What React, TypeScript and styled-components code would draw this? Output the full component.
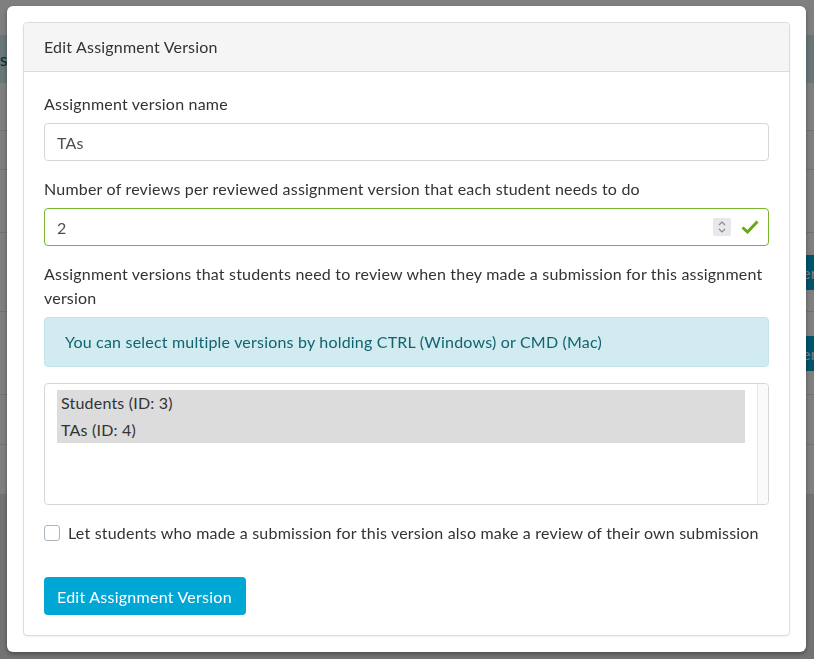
import React from "react";
import styled, { createGlobalStyle } from "styled-components";

const GlobalStyle = createGlobalStyle`
  html, body { margin: 0; padding: 0; }
  body {
    font-family: Lato, "Open Sans", "Noto Sans", sans-serif;
    font-size: 16px;
    letter-spacing: 0.2px;
    color: #333;
    background: #e6e6e6;
    overflow: hidden;
  }
  * { box-sizing: border-box; }
`;

/* ---------- underlying page (dimmed by the backdrop) ---------- */
const Page = styled.div`
  height: 659px;
  display: flex;
  flex-direction: column;
  background: #e6e6e6;
`;
const PageTop = styled.div`
  height: 35px;
  background: #fff;
`;
const InfoBand = styled.div`
  height: 48px;
  background: #d1ecf1;
  color: #0c5460;
  display: flex;
  align-items: center;
  padding-left: 0;
  font-size: 17px;
`;
const PageRow = styled.div<{ $h: number }>`
  height: ${(p) => p.$h}px;
  background: #fff;
  border-bottom: 1px solid #dee2e6;
  display: flex;
  justify-content: flex-end;
  align-items: center;
`;
const PageButton = styled.div`
  width: 60px;
  height: 35px;
  margin-right: -44px;
  background: #00a7d5;
  color: #fff;
  border-radius: 4px;
  display: flex;
  align-items: center;
  padding-left: 4px;
  font-size: 16px;
`;

/* ---------- modal ---------- */
const Backdrop = styled.div`
  position: fixed;
  inset: 0;
  background: rgba(0, 0, 0, 0.5);
  padding: 6px 8px 7px 7px;
  display: flex;
  align-items: flex-start;
`;
const Modal = styled.div`
  width: 799px;
  height: 646px;
  background: #fff;
  border-radius: 6px;
  box-shadow: 0 2px 4px rgba(0, 0, 0, 0.35);
  padding: 16px;
`;
const Card = styled.div`
  border: 1px solid #dcdcdc;
  border-radius: 4px;
  box-shadow: 0 1px 2px rgba(0, 0, 0, 0.06);
  overflow: hidden;
`;
const CardHeader = styled.div`
  height: 49px;
  background: #f5f5f5;
  border-bottom: 1px solid #dcdcdc;
  padding: 0 20px;
  display: flex;
  align-items: center;
  line-height: 24px;
`;
const CardBody = styled.div`
  padding: 20px 20px 20px;
  display: flex;
  flex-direction: column;
`;
const Group = styled.div`
  margin-bottom: 16px;
  display: flex;
  flex-direction: column;
`;
const Label = styled.label`
  display: block;
  line-height: 24px;
  margin-bottom: 7px;
  color: #333;
`;
const InputWrap = styled.div`
  position: relative;
`;
const TextInput = styled.input<{ $valid?: boolean }>`
  width: 100%;
  height: 38px;
  border: 1px solid ${(p) => (p.$valid ? "#7ab52c" : "#d4d7da")};
  border-radius: 4px;
  padding: 0 12px;
  font: inherit;
  letter-spacing: inherit;
  color: #4a4f55;
  background: #fff;
  outline: none;
`;
const Adornments = styled.div`
  position: absolute;
  right: 10px;
  top: 0;
  bottom: 0;
  display: flex;
  align-items: center;
  gap: 10px;
  pointer-events: none;
`;
const Spinner = styled.div`
  width: 18px;
  height: 18px;
  background: #e8e8ec;
  border-radius: 2px;
  display: flex;
  align-items: center;
  justify-content: center;
`;
const Alert = styled.div`
  background: #d2ebf0;
  border: 1px solid #c3e4ea;
  border-radius: 4px;
  color: #10646f;
  padding: 12px 20px;
  line-height: 24px;
  margin-bottom: 16px;
`;
const SelectBox = styled.div`
  height: 122px;
  border: 1px solid #d4d7da;
  border-radius: 4px;
  display: flex;
  margin-bottom: 16px;
  overflow: hidden;
`;
const OptionList = styled.div`
  flex: 1;
  padding: 6px 12px;
`;
const Option = styled.div<{ $selected?: boolean }>`
  height: 26.5px;
  line-height: 26px;
  padding-left: 4px;
  background: ${(p) => (p.$selected ? "#dcdcdc" : "transparent")};
  color: #333;
`;
const ScrollTrack = styled.div`
  width: 11px;
  background: #fafafa;
  border-left: 1px solid #e6e6e6;
`;
const CheckRow = styled.label`
  display: flex;
  align-items: center;
  gap: 8px;
  line-height: 24px;
  margin-bottom: 32px;
  white-space: nowrap;
`;
const CheckBox = styled.span`
  width: 16px;
  height: 16px;
  border: 1px solid #adb5bd;
  border-radius: 3px;
  background: #fff;
  flex-shrink: 0;
`;
const Button = styled.button`
  align-self: flex-start;
  height: 38px;
  padding: 0 14px 0 13px;
  border: none;
  border-radius: 4px;
  background: #00a7d5;
  color: #fff;
  font: inherit;
  letter-spacing: 0.25px;
  cursor: pointer;
`;

export default function App() {
  return (
    <>
      <GlobalStyle />
      <Page>
        <PageTop />
        <InfoBand>si</InfoBand>
        <PageRow $h={48} />
        <PageRow $h={39} />
        <PageRow $h={63} />
        <PageRow $h={79}>
          <PageButton>er</PageButton>
        </PageRow>
        <PageRow $h={83}>
          <PageButton>er</PageButton>
        </PageRow>
        <PageRow $h={50} />
        <PageRow $h={50} />
      </Page>
      <Backdrop>
        <Modal>
          <Card>
            <CardHeader>Edit Assignment Version</CardHeader>
            <CardBody>
              <Group>
                <Label htmlFor="name">Assignment version name</Label>
                <TextInput id="name" defaultValue="TAs" />
              </Group>
              <Group>
                <Label htmlFor="num">
                  Number of reviews per reviewed assignment version that each student needs to do
                </Label>
                <InputWrap>
                  <TextInput id="num" $valid defaultValue="2" />
                  <Adornments>
                    <Spinner>
                      <svg width="10" height="14" viewBox="0 0 10 14">
                        <path d="M2 5 L5 2 L8 5" fill="none" stroke="#8a8a90" strokeWidth="1.2" />
                        <path d="M2 9 L5 12 L8 9" fill="none" stroke="#8a8a90" strokeWidth="1.2" />
                      </svg>
                    </Spinner>
                    <svg width="18" height="14" viewBox="0 0 18 14">
                      <path d="M1.5 7.5 L6.5 12 L16.5 1.5" fill="none" stroke="#6aa818" strokeWidth="3" />
                    </svg>
                  </Adornments>
                </InputWrap>
              </Group>
              <Label>
                Assignment versions that students need to review when they made a submission for this assignment
                version
              </Label>
              <Alert>You can select multiple versions by holding CTRL (Windows) or CMD (Mac)</Alert>
              <SelectBox>
                <OptionList>
                  <Option $selected>Students (ID: 3)</Option>
                  <Option $selected>TAs (ID: 4)</Option>
                </OptionList>
                <ScrollTrack />
              </SelectBox>
              <CheckRow>
                <CheckBox />
                Let students who made a submission for this version also make a review of their own submission
              </CheckRow>
              <Button>Edit Assignment Version</Button>
            </CardBody>
          </Card>
        </Modal>
      </Backdrop>
    </>
  );
}
